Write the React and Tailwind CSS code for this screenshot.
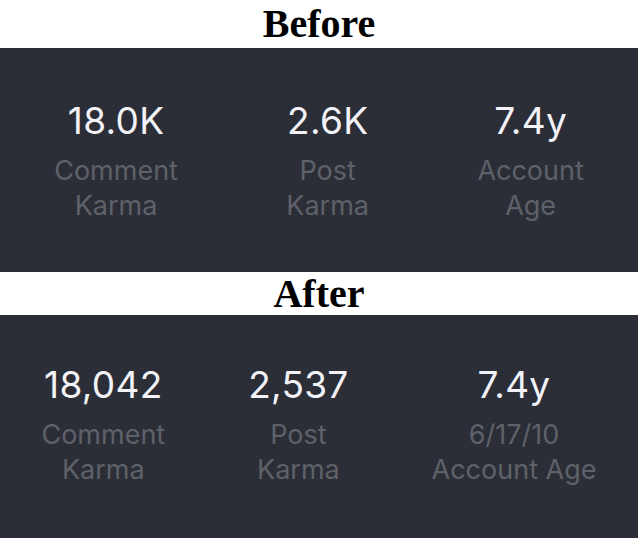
export default function App() {
  const Title = ({ children, h }) => (
    <div
      className={`flex items-center justify-center bg-white text-black font-bold text-[40px] leading-none ${h}`}
      style={{ fontFamily: '"Liberation Serif", serif' }}
    >
      {children}
    </div>
  );
  const Stat = ({ value, label }) => (
    <div className="flex flex-col items-center text-center">
      <div className="text-[37px] leading-[37px] tracking-[0.3px] text-[#f2f2f7]">{value}</div>
      <div className="mt-[14px] text-[27px] leading-[35px] text-[#5e6169]">{label}</div>
    </div>
  );
  return (
    <div className="w-[638px] h-[538px] flex flex-col bg-white" style={{ fontFamily: 'Inter, "Noto Sans", sans-serif' }}>
      <Title h="h-[48px]">Before</Title>
      <div className="h-[224px] pt-[4px] bg-[#2c2e37] flex items-center justify-around">
        <Stat value="18.0K" label={<>Comment<br />Karma</>} />
        <Stat value="2.6K" label={<>Post<br />Karma</>} />
        <Stat value="7.4y" label={<>Account<br />Age</>} />
      </div>
      <Title h="h-[43px]">After</Title>
      <div className="flex-1 bg-[#2c2e37] flex items-center justify-around">
        <Stat value="18,042" label={<>Comment<br />Karma</>} />
        <Stat value="2,537" label={<>Post<br />Karma</>} />
        <Stat value="7.4y" label={<>6/17/10<br />Account Age</>} />
      </div>
    </div>
  );
}
